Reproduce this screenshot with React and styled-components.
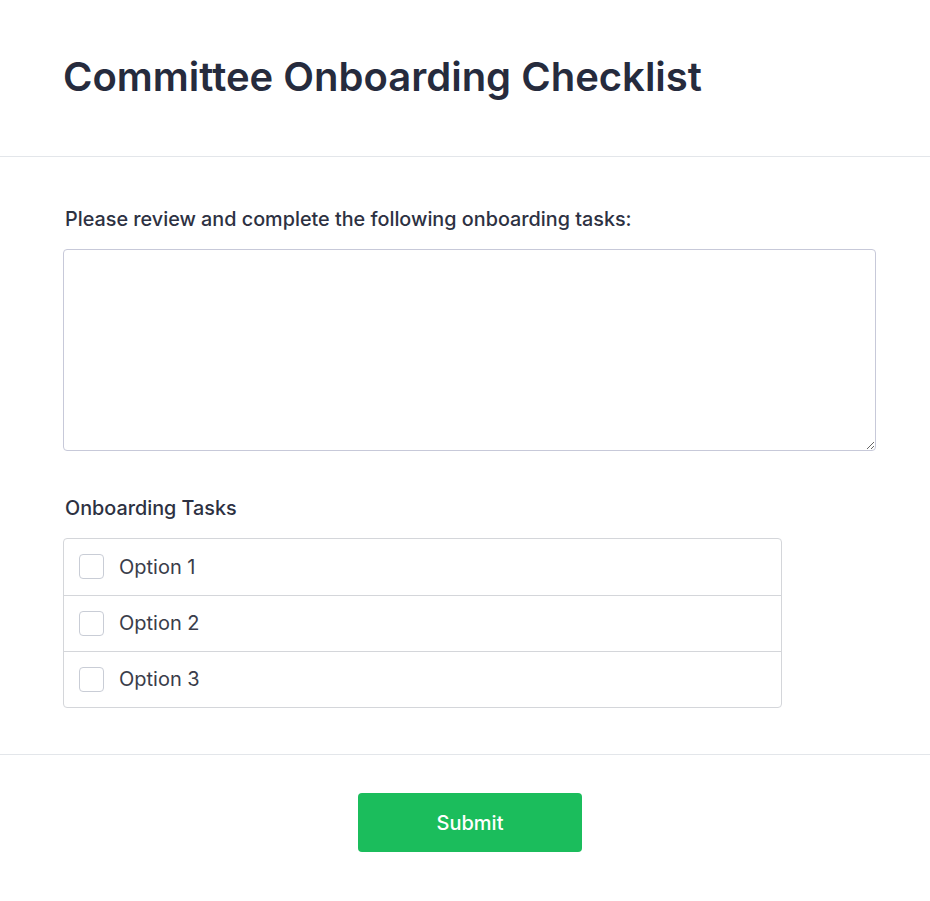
import React from "react";
import styled, { createGlobalStyle } from "styled-components";

const Global = createGlobalStyle`
  html, body { margin: 0; padding: 0; background: #ffffff; }
  body { font-family: Inter, "Noto Sans", sans-serif; color: #262b3d; }
  * { box-sizing: border-box; }
`;

const Page = styled.div`
  display: flex;
  flex-direction: column;
`;

const Header = styled.header`
  padding: 52px 54px 54px 63px;
  border-bottom: 1px solid #e3e6ea;
`;

const Title = styled.h1`
  margin: 0;
  font-size: 40px;
  line-height: 50px;
  font-weight: 600;
  color: #262b3d;
`;

const Body = styled.main`
  padding: 49px 54px 46px 63px;
  display: flex;
  flex-direction: column;
  border-bottom: 1px solid #e3e6ea;
`;

const FieldLabel = styled.label`
  display: block;
  margin: 0 0 17px 2px;
  font-size: 19.8px;
  line-height: 26px;
  font-weight: 500;
  color: #2d3142;
`;

const TextArea = styled.textarea`
  display: block;
  width: 100%;
  height: 202px;
  border: 1px solid #c7c9d9;
  border-radius: 4px;
  resize: vertical;
  font-family: inherit;
  font-size: 16px;
  padding: 10px 12px;
  margin-bottom: 44px;
  outline: none;
`;

const Group = styled.div`
  width: 719px;
  border: 1px solid #d4d6da;
  border-radius: 4px;
  display: flex;
  flex-direction: column;
`;

const Row = styled.label`
  display: flex;
  align-items: center;
  gap: 15px;
  height: ${(p) => p.$h}px;
  padding: 0 15px 1px;
  border-bottom: ${(p) => (p.$last ? "none" : "1px solid #d4d6da")};
  cursor: pointer;
`;

const Box = styled.span`
  width: 25px;
  height: 25px;
  border: 1px solid #c9cdd6;
  border-radius: 4px;
  background: #fff;
  flex: none;
`;

const OptionText = styled.span`
  font-size: 20px;
  line-height: 24px;
  color: #3a3d4a;
`;

const Footer = styled.footer`
  display: flex;
  justify-content: center;
  padding: 38px 54px 48px 64px;
`;

const Submit = styled.button`
  width: 224px;
  height: 59px;
  border: none;
  border-radius: 4px;
  background: #1bbd5c;
  color: #ffffff;
  font-family: inherit;
  font-size: 20px;
  font-weight: 500;
  cursor: pointer;
`;

const options = [
  { label: "Option 1", h: 57 },
  { label: "Option 2", h: 56 },
  { label: "Option 3", h: 55 },
];

export default function App() {
  return (
    <Page>
      <Global />
      <Header>
        <Title>Committee Onboarding Checklist</Title>
      </Header>
      <Body>
        <FieldLabel htmlFor="notes">Please review and complete the following onboarding tasks:</FieldLabel>
        <TextArea id="notes" />
        <FieldLabel as="div">Onboarding Tasks</FieldLabel>
        <Group>
          {options.map((o, i) => (
            <Row key={o.label} $h={o.h} $last={i === options.length - 1}>
              <Box />
              <OptionText>{o.label}</OptionText>
            </Row>
          ))}
        </Group>
      </Body>
      <Footer>
        <Submit>Submit</Submit>
      </Footer>
    </Page>
  );
}
